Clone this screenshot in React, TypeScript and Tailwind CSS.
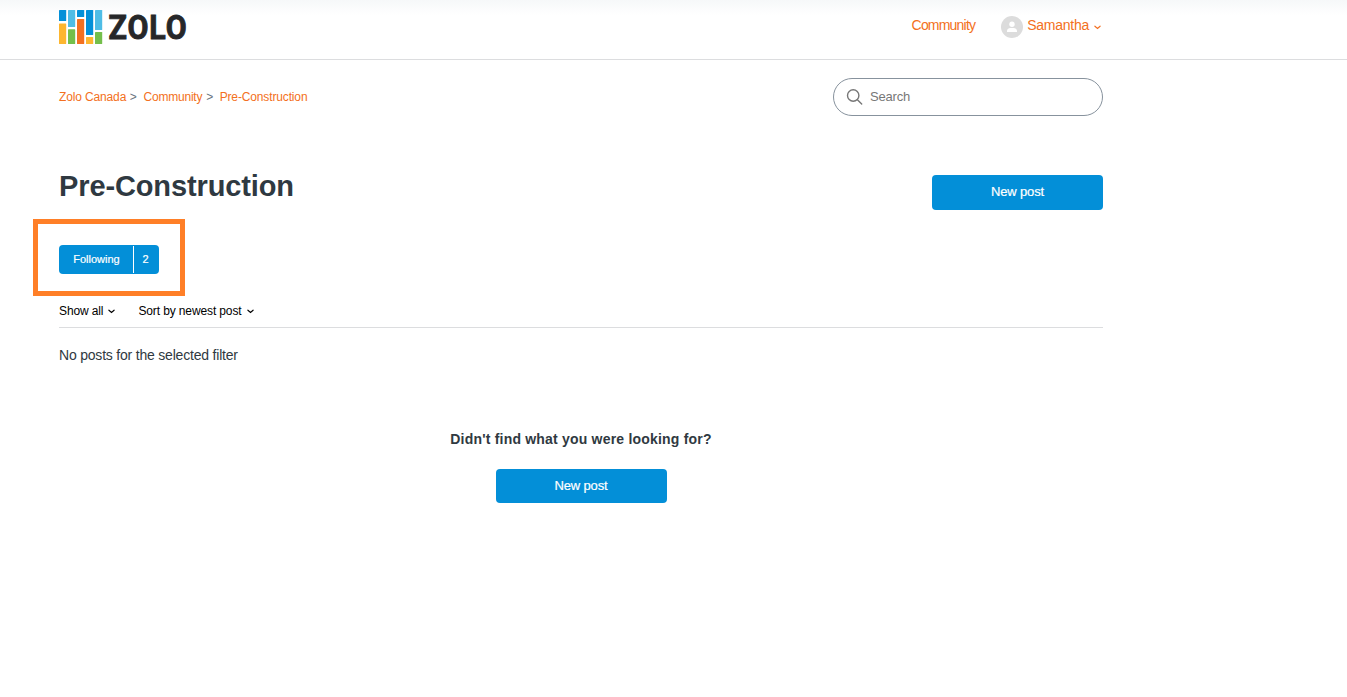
/**
 * CommunityTopicPage - Topic view with follow button, filters and an empty post list
 */

import type { ReactNode } from 'react';

const LOGO_BARS = [
  { x: 0, y: 10, h: 11, fill: '#0490d8' },
  { x: 0, y: 23.5, h: 20.5, fill: '#fdb62f' },
  { x: 9, y: 10, h: 17, fill: '#4fbde6' },
  { x: 9, y: 29.3, h: 14.7, fill: '#74bf4b' },
  { x: 18, y: 10, h: 7, fill: '#0490d8' },
  { x: 18, y: 19, h: 25, fill: '#f37021' },
  { x: 27, y: 10, h: 25, fill: '#0490d8' },
  { x: 27, y: 37, h: 7, fill: '#fdb62f' },
  { x: 36, y: 10, h: 20, fill: '#4fbde6' },
  { x: 36, y: 32, h: 12, fill: '#74bf4b' },
];

function Logo() {
  return (
    <svg width="132" height="58" viewBox="0 0 132 58" className="block overflow-visible">
      {LOGO_BARS.map((bar) => (
        <rect key={`${bar.x}-${bar.y}`} x={bar.x} y={bar.y} width="7.2" height={bar.h} rx="0.6" fill={bar.fill} />
      ))}
      <text
        x="49.5"
        y="39"
        textLength="79"
        lengthAdjust="spacingAndGlyphs"
        fill="#262729"
        stroke="#262729"
        strokeWidth="0.9"
        className="font-[Roboto,sans-serif] text-[33.5px] font-bold tracking-[1px]"
      >
        ZOLO
      </text>
    </svg>
  );
}

function Caret({ className }: { className: string }) {
  return (
    <svg width="7" height="5" viewBox="0 0 7 5" fill="none" stroke="currentColor" strokeWidth="1.15" strokeLinecap="round" className={className}>
      <path d="M0.9 1.2 3.5 3.5 6.1 1.2" />
    </svg>
  );
}

function Avatar() {
  return (
    <svg width="22" height="22" viewBox="0 0 22 22" className="block">
      <circle cx="11" cy="11" r="11" fill="#dcdcdc" />
      <circle cx="11" cy="8.3" r="2.7" fill="#fff" />
      <path d="M6 16v-1.2c0-1.7 1.7-2.8 3.4-2.8h3.2c1.7 0 3.4 1.1 3.4 2.8V16z" fill="#fff" />
    </svg>
  );
}

function NewPostButton({ className }: { className: string }) {
  return (
    <button className={`block w-[171px] rounded-[4px] bg-[#038fd8] text-[13px] tracking-[-0.13px] text-white [-webkit-text-stroke:0.2px_white] ${className}`}>
      New post
    </button>
  );
}

function Crumb({ children }: { children: ReactNode }) {
  return <a href="#" className="text-[#f37021]">{children}</a>;
}

export default function App() {
  return (
    <div className="h-[697px] overflow-hidden bg-white font-['Liberation_Sans',Arial,sans-serif] text-[#2f3941]">
      <header className="h-[60px] border-b border-[#dcdddf] bg-linear-to-b from-[#f6f8f9] to-white to-[15px]">
        <div className="ml-[59px] flex w-[1044px] justify-between">
          <a href="#">
            <Logo />
          </a>
          <nav className="flex items-start text-[14px] leading-5 text-[#f37021]">
            <a href="#" className="mt-[15px] mr-[26px] tracking-[-0.8px]">Community</a>
            <button className="flex items-start">
              <span className="mt-4 mr-[4px]">
                <Avatar />
              </span>
              <span className="mt-[15px] tracking-[-0.25px]">Samantha</span>
              <Caret className="mt-[25px] mr-[2px] ml-[5px]" />
            </button>
          </nav>
        </div>
      </header>

      <main className="ml-[59px] w-[1044px]">
        <div className="flex items-start justify-between pt-[18px]">
          <ol className="mt-[11px] flex text-[12px] leading-4 tracking-[-0.14px]">
            <li><Crumb>Zolo Canada</Crumb></li>
            <li className="mr-[7px] ml-[3.5px] text-[#68737d]">&gt;</li>
            <li className="tracking-[-0.22px]"><Crumb>Community</Crumb></li>
            <li className="mr-[6.5px] ml-[4px] text-[#68737d]">&gt;</li>
            <li><Crumb>Pre-Construction</Crumb></li>
          </ol>
          <div className="flex h-[38px] w-[270px] items-center rounded-full border border-[#87929d] pl-[12px]">
            <svg width="17" height="17" viewBox="0 0 17 17" fill="none" stroke="#777" strokeWidth="1.4" strokeLinecap="round">
              <circle cx="7.2" cy="6.5" r="5.7" />
              <path d="M11.4 10.7 15.7 15" />
            </svg>
            <input
              type="search"
              placeholder="Search"
              className="ml-[7px] w-[220px] bg-transparent text-[13px] tracking-[-0.2px] outline-none placeholder:text-[#777]"
            />
          </div>
        </div>

        <div className="mt-[52px] flex items-start justify-between">
          <h1 className="text-[29px] leading-9 font-bold tracking-[-0.12px]">Pre-Construction</h1>
          <NewPostButton className="mt-[7px] h-[35px] pb-[2px]" />
        </div>

        {/* Follow button with its follower count */}
        <div className="relative mt-[35px] flex h-[29px] w-[100px] items-center rounded-[4px] bg-[#038fd8] text-[11px] text-white [-webkit-text-stroke:0.2px_white]">
          <button className="w-[74px] pl-px">Following</button>
          <span className="flex h-[27px] w-[26px] items-center justify-center border-l border-white pr-[2px]">2</span>
          <div className="pointer-events-none absolute -top-[26px] -left-[26px] h-[77px] w-[152px] border-5 border-[#ff7f27]" />
        </div>

        <div className="mt-[28px] flex h-[26px] gap-[23px] border-b border-[#dcdddf] text-[12px] leading-[18px] tracking-[-0.12px] text-black">
          <button className="flex items-start">
            Show all
            <Caret className="mt-[7px] ml-[5px]" />
          </button>
          <button className="flex items-start">
            Sort by newest post
            <Caret className="mt-[7px] ml-[5px]" />
          </button>
        </div>

        <p className="mt-[17px] text-[14px] leading-5 tracking-[-0.2px]">No posts for the selected filter</p>

        <section className="mt-[64px] flex flex-col items-center">
          <h2 className="text-[14px] leading-5 font-bold tracking-[0.2px]">Didn't find what you were looking for?</h2>
          <NewPostButton className="mt-[20px] h-[34px] pb-[1px]" />
        </section>
      </main>
    </div>
  );
}
